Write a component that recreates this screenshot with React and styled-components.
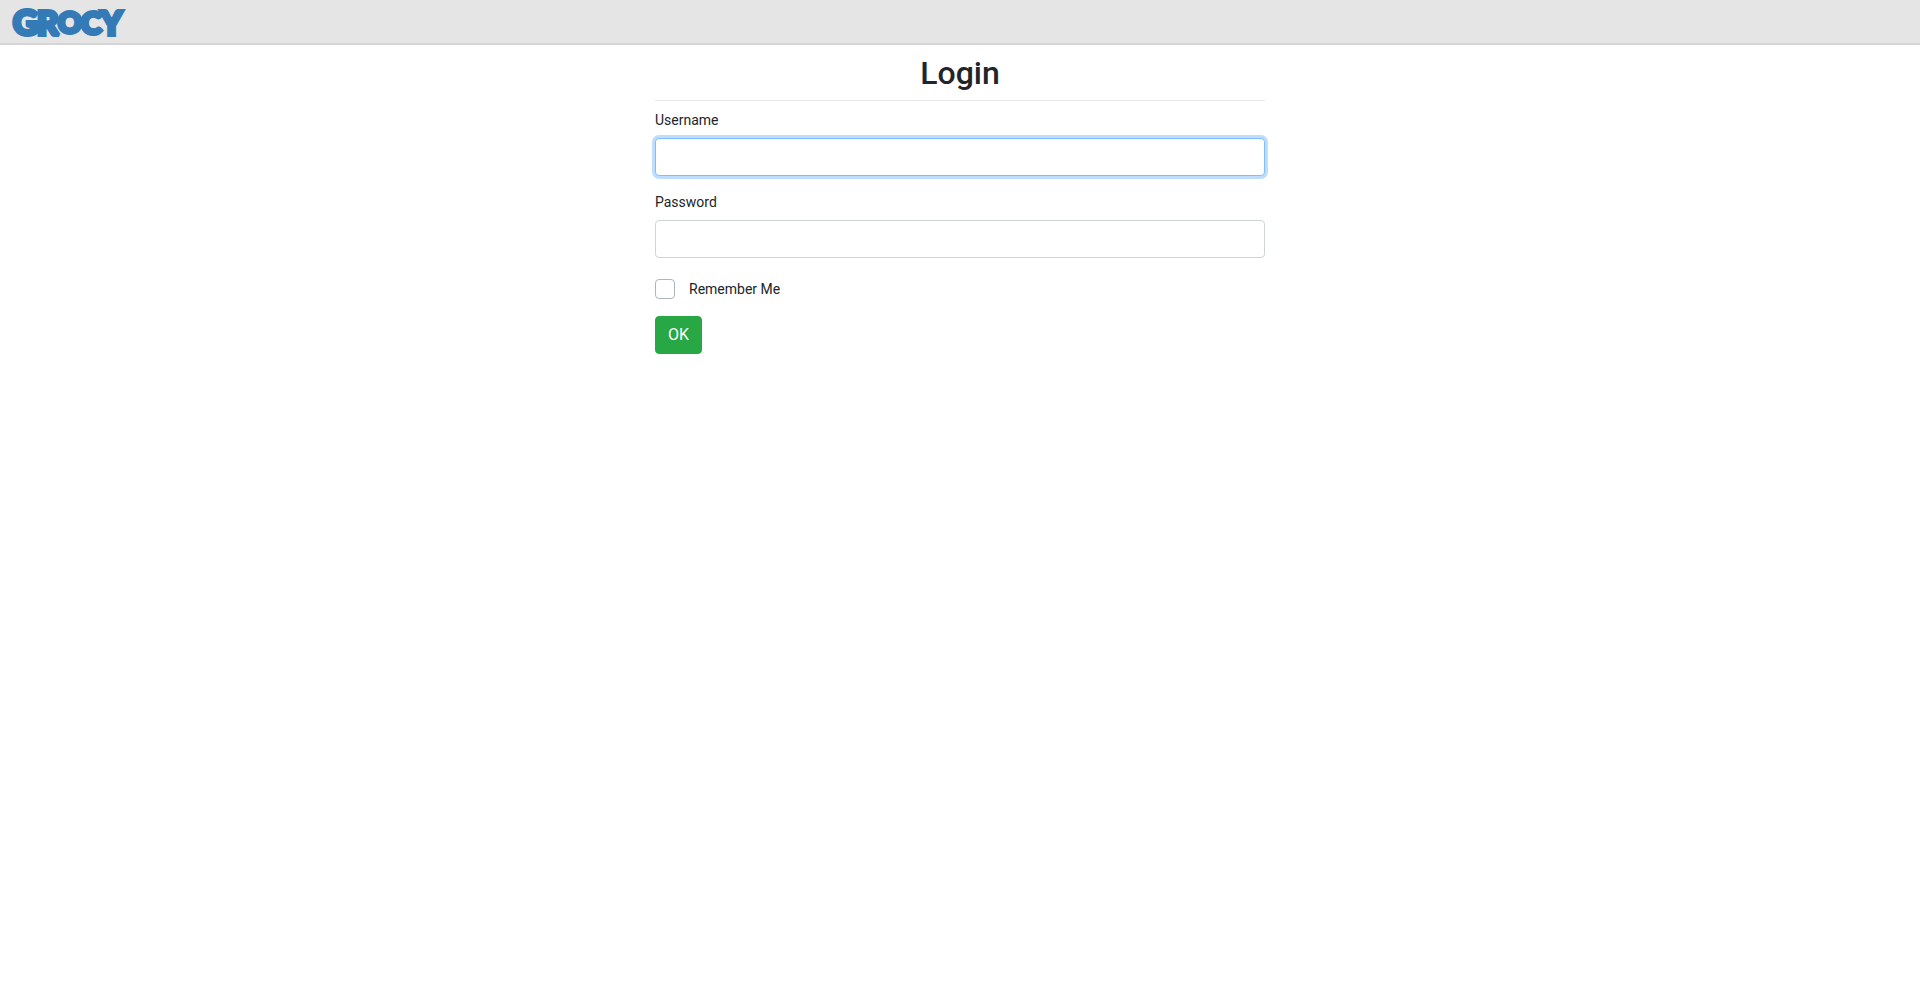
import React, { useState } from 'react'
import styled, { createGlobalStyle } from 'styled-components'

function App() {
  const [username, setUsername] = useState('')
  const [password, setPassword] = useState('')
  const [remember, setRemember] = useState(false)

  return (
    <>
      <GlobalStyle />
      <Navbar>
        <Brand href="#" aria-label="Grocy">
          <Logo />
        </Brand>
      </Navbar>
      <Main>
        <Title>Login</Title>
        <Form onSubmit={(e) => e.preventDefault()}>
          <FormGroup>
            <Label htmlFor="username">Username</Label>
            <InputBox
              id="username"
              type="text"
              value={username}
              onChange={(e) => setUsername(e.target.value)}
              autoFocus
            />
          </FormGroup>
          <FormGroup>
            <Label htmlFor="password">Password</Label>
            <InputBox
              id="password"
              type="password"
              value={password}
              onChange={(e) => setPassword(e.target.value)}
            />
          </FormGroup>
          <CheckRow>
            <Checkbox
              id="remember"
              type="checkbox"
              checked={remember}
              onChange={(e) => setRemember(e.target.checked)}
            />
            <Label htmlFor="remember">Remember Me</Label>
          </CheckRow>
          <Button type="submit">OK</Button>
        </Form>
      </Main>
    </>
  )
}

const Logo = () => (
  <LogoSvg viewBox="0 0 114 31" aria-hidden="true">
    <text>
      <tspan x="1" y="28" fontSize="34">G</tspan>
      <tspan x="25" y="28" fontSize="33">R</tspan>
      <tspan x="46" y="26" fontSize="29">O</tspan>
      <tspan x="69" y="27" fontSize="31">C</tspan>
      <tspan x="89" y="28" fontSize="32">Y</tspan>
    </text>
  </LogoSvg>
)

export default App

const GlobalStyle = createGlobalStyle`
  *, *::before, *::after {
    box-sizing: border-box;
  }

  body {
    margin: 0;
    background-color: #fff;
    color: #212529;
    font-family: Roboto, sans-serif;
    font-size: 14px;
    line-height: 20px;
  }
`

const Navbar = styled.header`
  display: flex;
  align-items: center;
  height: 45px;
  padding: 2px 12px 0;
  background-color: #e5e5e5;
  border-bottom: 2px solid #d5d5d5;
`

const Brand = styled.a`
  display: flex;
`

const LogoSvg = styled.svg`
  width: 114px;
  height: 31px;
  overflow: visible;

  text {
    font-family: Lato, sans-serif;
    font-weight: 900;
    fill: #337ab7;
    stroke: #337ab7;
    stroke-width: 4px;
    stroke-linejoin: miter;
    stroke-miterlimit: 2;
  }
`

const Main = styled.main`
  width: calc(100% / 3);
  min-width: 320px;
  margin: 0 auto;
  padding: 9px 15px;
`

const Title = styled.h2`
  margin: 0;
  padding-bottom: 8px;
  border-bottom: 1px solid #e5e5e5;
  font-size: 32px;
  font-weight: 500;
  line-height: 38px;
  text-align: center;
`

const Form = styled.form`
  padding-top: 9px;
`

const FormGroup = styled.div`
  display: flex;
  flex-direction: column;
  gap: 8px;
  margin-bottom: 16px;
`

const Label = styled.label`
  font-size: 14px;
`

const InputBox = styled.input`
  width: 100%;
  height: 38px;
  padding: 6px 12px;
  border: 1px solid #ced4da;
  border-radius: 4px;
  background-color: #fff;
  color: #495057;
  font-family: inherit;
  font-size: 16px;

  &:focus {
    border-color: #80bdff;
    outline: 0;
    box-shadow: 0 0 0 3px rgba(0, 123, 255, 0.25);
  }
`

const CheckRow = styled.div`
  display: flex;
  align-items: center;
  gap: 14px;
  height: 30px;
  margin-bottom: 12px;
`

const Checkbox = styled.input`
  appearance: none;
  width: 20px;
  height: 20px;
  margin: 0;
  border: 1px solid #adb5bd;
  border-radius: 4px;
  background-color: #fff;

  &:checked {
    border-color: #007bff;
    background-color: #007bff;
  }
`

const Button = styled.button`
  padding: 6px 12px;
  border: 1px solid #28a745;
  border-radius: 4px;
  background-color: #28a745;
  color: #fff;
  font-family: inherit;
  font-size: 16px;
  line-height: 24px;
  cursor: pointer;
`
